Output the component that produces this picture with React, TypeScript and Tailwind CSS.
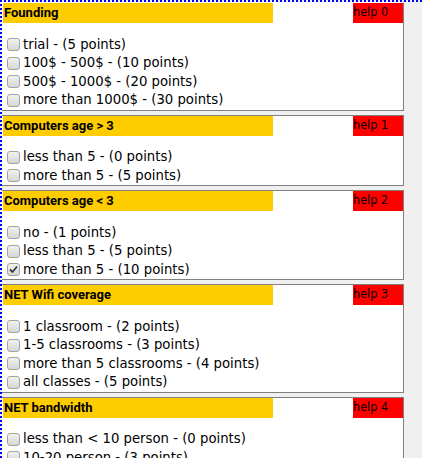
import React from "react";

type Option = { label: string; checked?: boolean };

const sections: { title: string; options: Option[] }[] = [
    {
        title: "Founding",
        options: [
            { label: "trial - (5 points)" },
            { label: "100$ - 500$ - (10 points)" },
            { label: "500$ - 1000$ - (20 points)" },
            { label: "more than 1000$ - (30 points)" },
        ],
    },
    {
        title: "Computers age > 3",
        options: [
            { label: "less than 5 - (0 points)" },
            { label: "more than 5 - (5 points)" },
        ],
    },
    {
        title: "Computers age < 3",
        options: [
            { label: "no - (1 points)" },
            { label: "less than 5 - (5 points)" },
            { label: "more than 5 - (10 points)", checked: true },
        ],
    },
    {
        title: "NET Wifi coverage",
        options: [
            { label: "1 classroom - (2 points)" },
            { label: "1-5 classrooms - (3 points)" },
            { label: "more than 5 classrooms - (4 points)" },
            { label: "all classes - (5 points)" },
        ],
    },
    {
        title: "NET bandwidth",
        options: [
            { label: "less than < 10 person - (0 points)" },
            { label: "10-20 person - (3 points)" },
        ],
    },
];

function Check({ checked }: { checked?: boolean }) {
    return (
        <span className="ml-1 mr-[3px] flex h-[13px] w-[13px] shrink-0 items-center justify-center rounded-[3px] border border-[#a3a3a3] bg-gradient-to-b from-[#f2f2f2] to-[#d6d6d6]">
            {checked && (
                <svg width="9" height="9" viewBox="0 0 9 9">
                    <path d="M1 4.5 L3.5 7 L8 1.5" fill="none" stroke="#3a3a3a" strokeWidth="1.8" />
                </svg>
            )}
        </span>
    );
}

export default function App() {
    return (
        <div className="h-[458px] overflow-hidden border-l-2 border-t-2 border-dotted border-[#0000ff] bg-[#f0f0f0] font-['DejaVu_Sans',sans-serif] text-[13.25px] text-black">
            <div className="flex w-[402px] flex-col gap-1">
                {sections.map((s, i) => (
                    <div
                        key={i}
                        className={`border-b border-r border-[#808080] bg-white pl-px ${i === 0 ? "border-t border-t-white" : "border-t"}`}
                    >
                        <div className="flex h-5 justify-between">
                            <div className="w-[270px] bg-[#ffcc00] pl-px font-['Roboto',sans-serif] text-[13px] font-bold leading-5">
                                {s.title}
                            </div>
                            <div className="w-[50px] bg-[#ff0000] pt-px font-['DejaVu_Sans_Condensed','Liberation_Sans_Narrow',sans-serif] text-[12.5px] leading-[15px]">
                                help {i}
                            </div>
                        </div>
                        <div className="h-[12.5px]" />
                        {s.options.map((o, j) => (
                            <div key={j} className="flex h-[18.5px] items-center">
                                <Check checked={o.checked} />
                                <span>{o.label}</span>
                            </div>
                        ))}
                    </div>
                ))}
            </div>
        </div>
    );
}
